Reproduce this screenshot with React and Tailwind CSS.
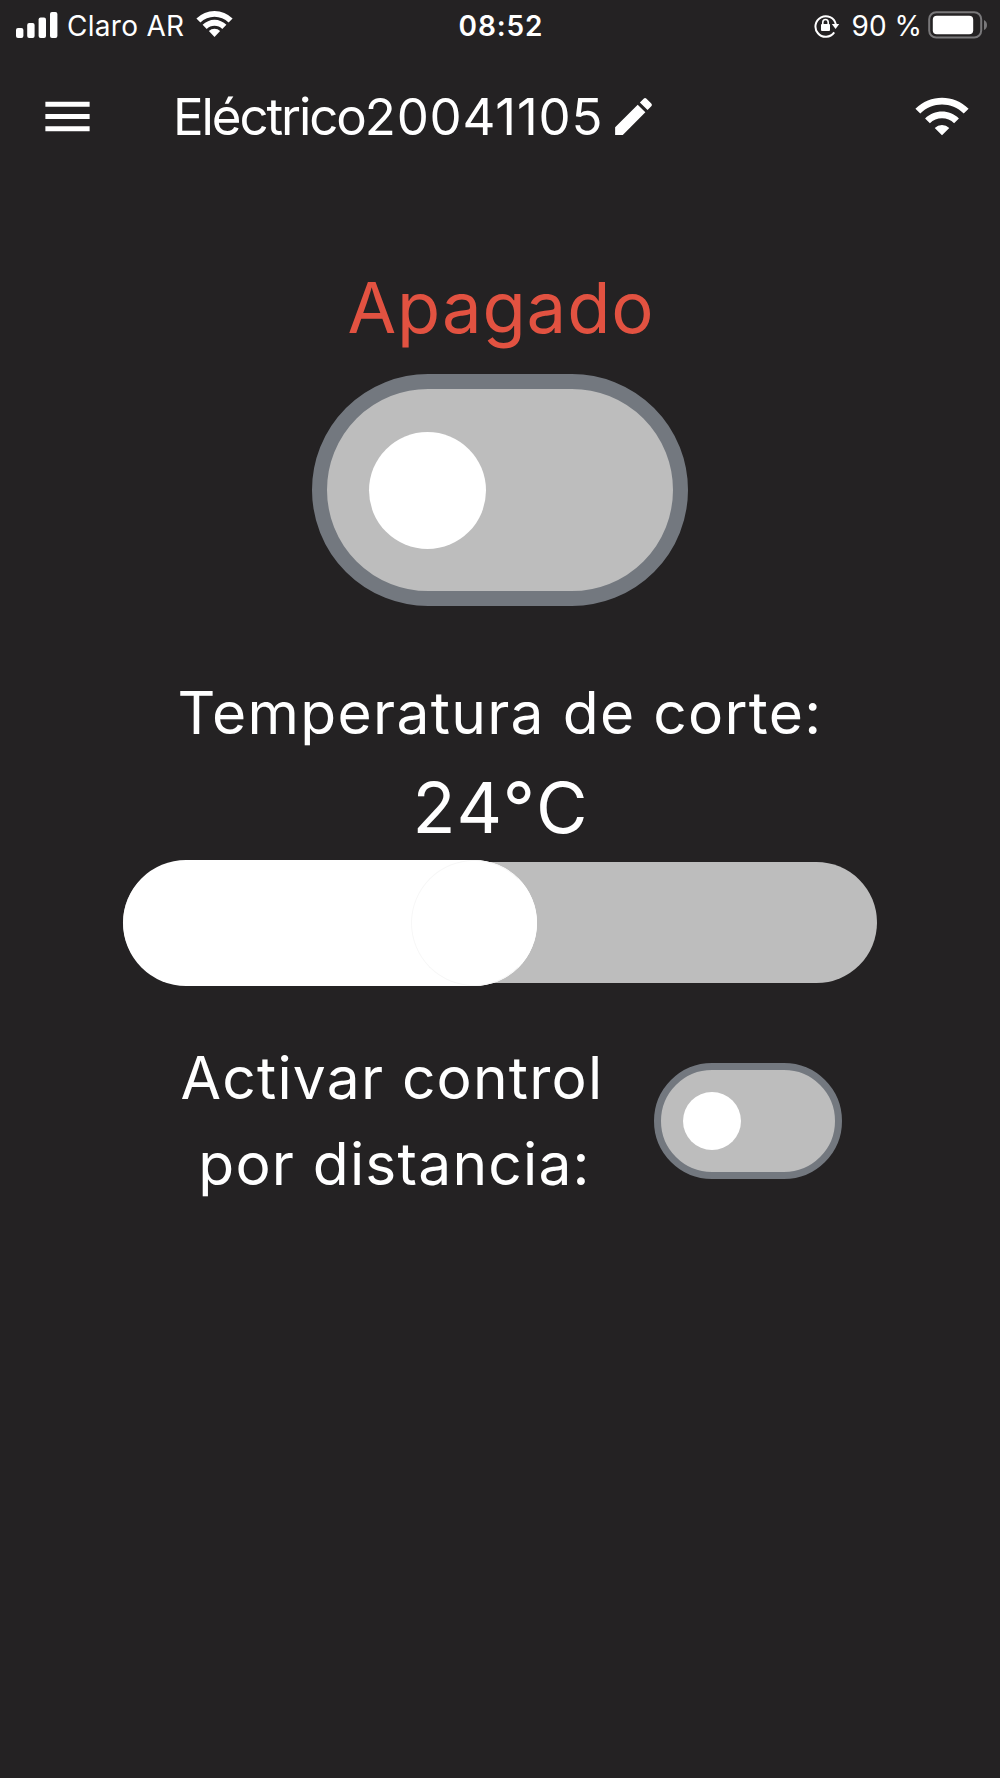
import { useState } from 'react'
import { MdMenu, MdEdit, MdWifi } from 'react-icons/md'

const MIN_TEMP = 0
const MAX_TEMP = 50

function StatusBar() {
  return (
    <div className="flex h-[51px] items-center pl-4 pr-3 text-[28px] leading-none">
      <div className="flex flex-1 items-center">
        <svg width="42" height="28" viewBox="0 0 42 28" fill="currentColor" className="-mt-[2px]">
          <rect x="0" y="17" width="7.4" height="10" rx="2" />
          <rect x="11.2" y="12" width="7.4" height="15" rx="2" />
          <rect x="22.6" y="6.5" width="7.4" height="20.5" rx="2" />
          <rect x="34" y="1" width="7.4" height="26" rx="2" />
        </svg>
        <span className="ml-[9px] w-[118px] whitespace-nowrap tracking-[0.3px]">Claro AR</span>
        <svg width="37" height="28" viewBox="0 0 37 28" fill="currentColor" className="ml-[11px] -mt-[3px]">
          <path d="M0.4 8.6 A25.6 25.6 0 0 1 36.6 8.6 L32.6 12.6 A20 20 0 0 0 4.4 12.6 Z" />
          <path d="M6.6 14.8 A16.8 16.8 0 0 1 30.4 14.8 L26.3 18.9 A11 11 0 0 0 10.7 18.9 Z" />
          <path d="M12.9 21.1 A8 8 0 0 1 24.1 21.1 L18.5 27 Z" />
        </svg>
      </div>
      <span className="pr-[2px] font-semibold tracking-[0.9px]">08:52</span>
      <div className="flex flex-1 items-center justify-end">
        <svg width="26" height="25" viewBox="0 0 26 25" fill="none" className="mr-[12px]">
          <path d="M20.2 19.4 A10.3 10.3 0 1 1 21.8 11.2" stroke="currentColor" strokeWidth="2" />
          <path d="M17.8 11 H25.2 L21.6 16 Z" fill="currentColor" />
          <rect x="7" y="11" width="9" height="7" rx="1" fill="currentColor" />
          <path d="M8.8 11.5 V9.2 A2.7 2.7 0 0 1 14.2 9.2 V11.5" stroke="currentColor" strokeWidth="1.6" />
        </svg>
        <span className="whitespace-nowrap">90 %</span>
        <svg width="60" height="28" viewBox="0 0 60 28" className="ml-[6px] -mt-[2px]">
          <rect x="1.2" y="1.2" width="52" height="25.4" rx="7" fill="none" stroke="#79787a" strokeWidth="2" />
          <rect x="4.8" y="4.8" width="40.4" height="18.4" rx="4" fill="#fff" />
          <path d="M56 9 Q59 10.5 59 14 Q59 17.5 56 19 Z" fill="#79787a" />
        </svg>
      </div>
    </div>
  )
}

function Header({ name, serial }) {
  return (
    <header className="flex h-[130px] items-center pl-[38px] pr-[29px]">
      <button>
        <MdMenu size={59} />
      </button>
      <h1 className="ml-[76px] w-[427px] text-[51px] leading-none whitespace-nowrap">
        <span className="tracking-[-2.1px]">{name}</span>
        <span className="tracking-[0.8px]">{serial}</span>
      </h1>
      <button className="ml-[9px]">
        <MdEdit size={49} />
      </button>
      <MdWifi size={58} className="ml-auto -mt-px" />
    </header>
  )
}

function BigSwitch({ on, onChange }) {
  return (
    <button
      onClick={() => onChange(!on)}
      className={`flex h-[232px] w-[376px] items-center rounded-full border-[15px] border-[#73787f] bg-[#bdbdbd] px-[42px] ${on ? 'justify-end' : ''}`}
    >
      <span className="size-[117px] rounded-full bg-white" />
    </button>
  )
}

function SmallSwitch({ on, onChange }) {
  return (
    <button
      onClick={() => onChange(!on)}
      className={`flex h-[116px] w-[188px] shrink-0 items-center rounded-full border-[7px] border-[#73787f] bg-[#bdbdbd] px-[22px] ${on ? 'justify-end' : ''}`}
    >
      <span className="size-[58px] rounded-full bg-white" />
    </button>
  )
}

function TempSlider({ value }) {
  // the thumb is 126px wide and stays inside the 754px track
  const filled = 126 + ((value - MIN_TEMP) / (MAX_TEMP - MIN_TEMP)) * (754 - 126)
  return (
    <div className="flex h-[125px] w-[754px] items-center">
      <div className="h-[121px] w-full rounded-full bg-[#bdbdbd]">
        <div
          className="-mt-[2px] flex h-[126px] justify-end rounded-full bg-white"
          style={{ width: Math.min(filled - 13, 754) }}
        >
          <div className="size-[126px] rounded-full border border-[#f7f7f7] border-r-white bg-white" />
        </div>
      </div>
    </div>
  )
}

export default function App() {
  const [power, setPower] = useState(false)
  const [distance, setDistance] = useState(false)
  const temp = 24

  return (
    <div className="h-[1778px] w-[1000px] overflow-hidden bg-[#242223] font-[Inter,sans-serif] text-white">
      <StatusBar />
      <Header name="Eléctrico" serial="20041105" />

      <main className="flex flex-col items-center pt-[87px]">
        <p className="pl-[2px] text-[70.6px] leading-[80px] tracking-[0.9px] text-[#e25241]">{power ? 'Encendido' : 'Apagado'}</p>
        <div className="mt-[26px]">
          <BigSwitch on={power} onChange={setPower} />
        </div>

        <p className="mt-[67px] text-[58.7px] leading-[80px] tracking-[1.3px]">Temperatura de corte:</p>
        <p className="mt-[10px] pl-[2px] text-[70.6px] leading-[90px] tracking-[2px]">{temp}°C</p>
        <div className="mt-[7px]">
          <TempSlider value={temp} />
        </div>

        <div className="mt-[50px] flex items-center gap-[51px] pl-[23px]">
          <p className="text-center text-[58.7px] leading-[86.4px] tracking-[1.2px]">
            Activar control
            <br />
            <span className="pl-[5px]">por distancia:</span>
          </p>
          <SmallSwitch on={distance} onChange={setDistance} />
        </div>
      </main>
    </div>
  )
}
